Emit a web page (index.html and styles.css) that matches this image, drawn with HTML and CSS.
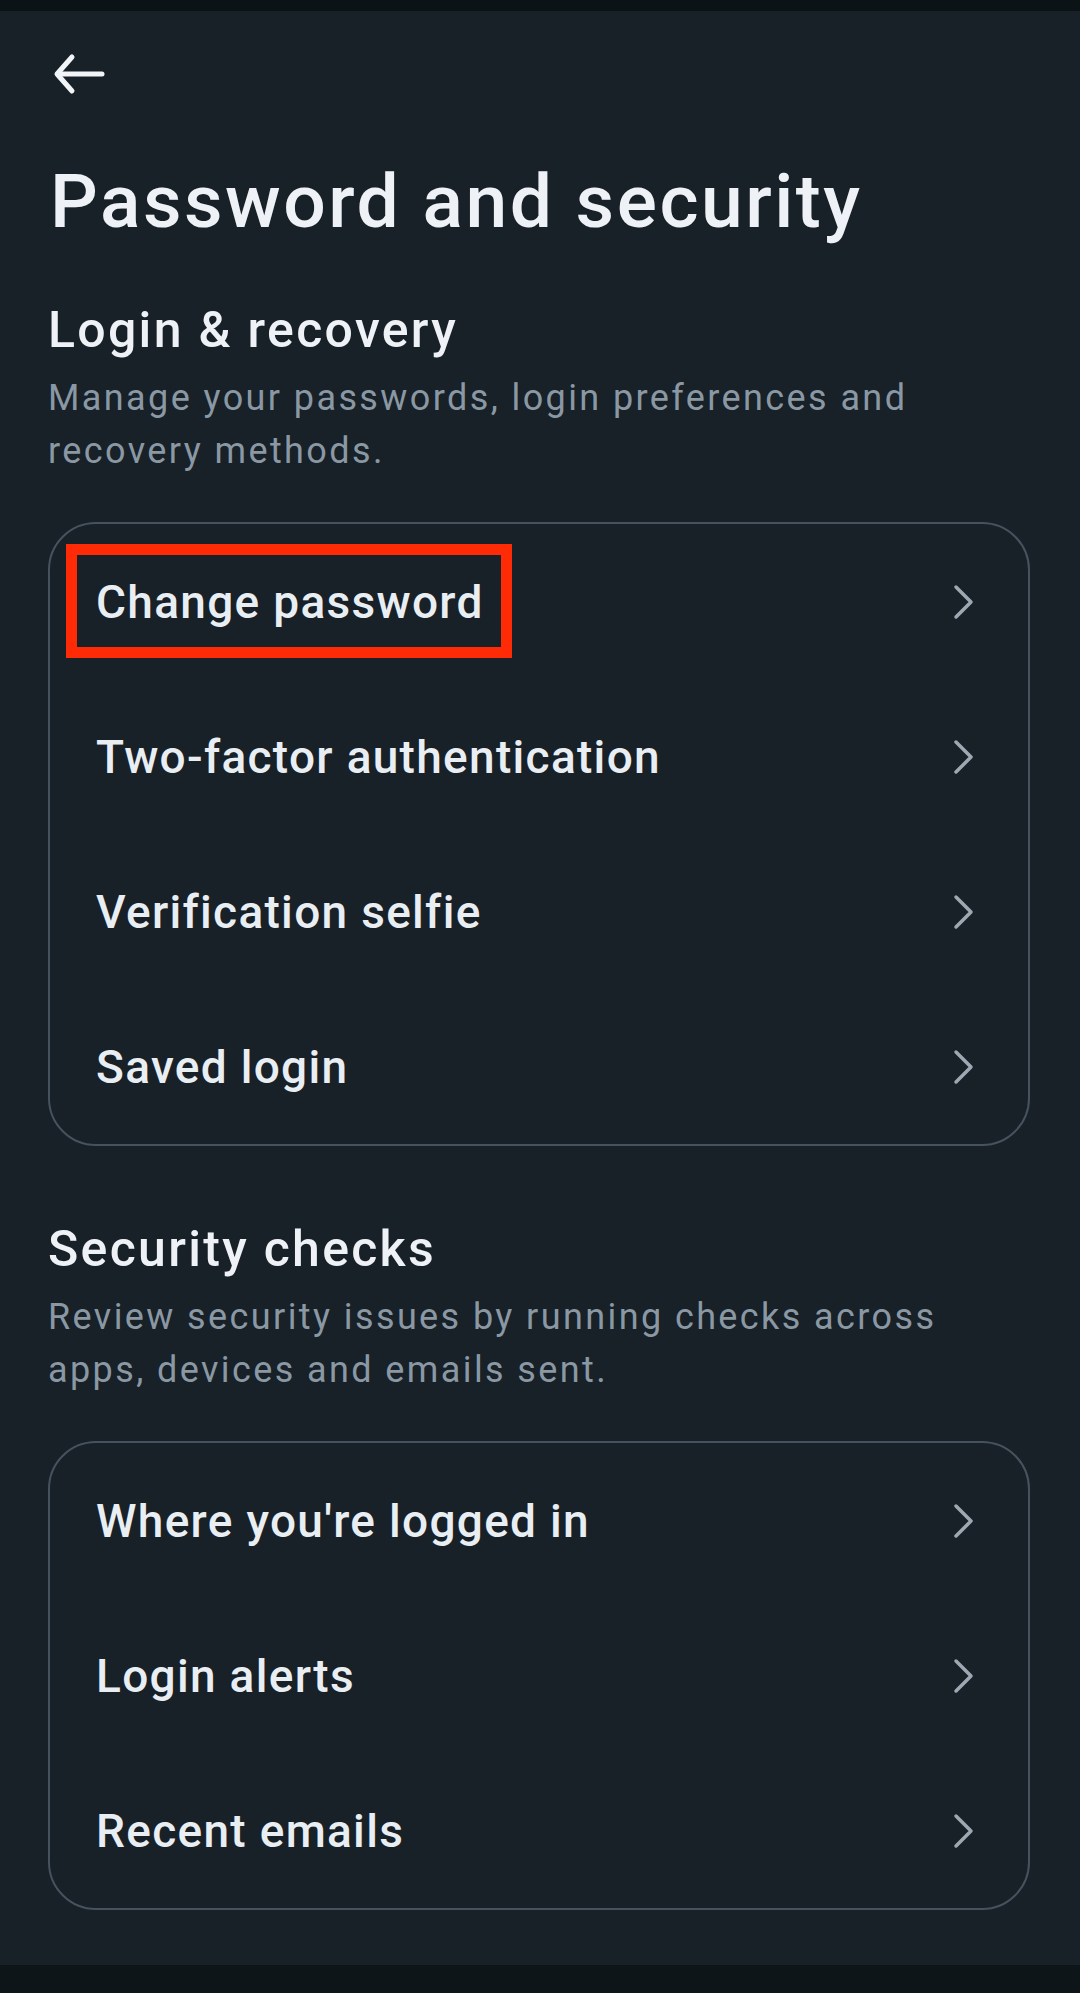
FILE: index.html
```html
<!DOCTYPE html>
<html lang="en">
<head>
<meta charset="utf-8">
<title>Password and security</title>
<link rel="stylesheet" href="styles.css">
</head>
<body>
<div class="screen">
  <div class="statusbar"></div>
  <header class="header">
    <svg class="back" width="56" height="44" viewBox="0 0 56 44" aria-label="Back">
      <path d="M52 22 H8" />
      <path d="M22 5 L7 22 L22 39" />
    </svg>
  </header>
  <main class="main">
    <h1 class="title">Password and security</h1>

    <section class="section">
      <h2 class="section-title">Login &amp; recovery</h2>
      <p class="section-desc">Manage your passwords, login preferences and recovery methods.</p>
      <div class="card">
        <div class="highlight"></div>
        <div class="row"><span class="label">Change password</span><svg class="chev" width="24" height="36" viewBox="0 0 24 36"><path d="M4 3 L19 18 L4 33"/></svg></div>
        <div class="row"><span class="label">Two-factor authentication</span><svg class="chev" width="24" height="36" viewBox="0 0 24 36"><path d="M4 3 L19 18 L4 33"/></svg></div>
        <div class="row"><span class="label">Verification selfie</span><svg class="chev" width="24" height="36" viewBox="0 0 24 36"><path d="M4 3 L19 18 L4 33"/></svg></div>
        <div class="row"><span class="label">Saved login</span><svg class="chev" width="24" height="36" viewBox="0 0 24 36"><path d="M4 3 L19 18 L4 33"/></svg></div>
      </div>
    </section>

    <section class="section section-second">
      <h2 class="section-title">Security checks</h2>
      <p class="section-desc">Review security issues by running checks across apps, devices and emails sent.</p>
      <div class="card">
        <div class="row"><span class="label">Where you're logged in</span><svg class="chev" width="24" height="36" viewBox="0 0 24 36"><path d="M4 3 L19 18 L4 33"/></svg></div>
        <div class="row"><span class="label">Login alerts</span><svg class="chev" width="24" height="36" viewBox="0 0 24 36"><path d="M4 3 L19 18 L4 33"/></svg></div>
        <div class="row"><span class="label">Recent emails</span><svg class="chev" width="24" height="36" viewBox="0 0 24 36"><path d="M4 3 L19 18 L4 33"/></svg></div>
      </div>
    </section>
  </main>
  <div class="navbar"></div>
</div>
</body>
</html>
```
FILE: styles.css
```css
* { box-sizing: border-box; }
html, body {
  margin: 0;
  padding: 0;
  background: #182028;
}
body {
  font-family: Roboto, "Liberation Sans", sans-serif;
  color: #eef2f6;
}
.screen {
  min-height: 100vh;
  display: flex;
  flex-direction: column;
}
.statusbar {
  height: 11px;
  background: #0c1317;
}
.header {
  height: 126px;
  display: flex;
  align-items: center;
  padding-left: 50px;
}
.back {
  display: block;
  fill: none;
  stroke: #f2f5f8;
  stroke-width: 5;
  stroke-linecap: round;
  stroke-linejoin: round;
}
.main {
  flex: 1;
  padding: 0 50px 0 48px;
}
.title {
  margin: 19px 0 0 2px;
  font-size: 75px;
  line-height: 90px;
  font-weight: 500;
  letter-spacing: 2.5px;
  color: #eef2f6;
}
.section {
  margin-top: 54px;
}
.section-second {
  margin-top: 73px;
}
.section-title {
  margin: 0;
  font-size: 50px;
  line-height: 60px;
  font-weight: 500;
  letter-spacing: 2.3px;
  color: #eef2f6;
}
.section-desc {
  margin: 12px 0 0;
  font-size: 36px;
  line-height: 53px;
  font-weight: 400;
  letter-spacing: 2.4px;
  color: #8a98a4;
}
.card {
  position: relative;
  margin-top: 44px;
  border: 2px solid #46525d;
  border-radius: 48px;
}
.row {
  height: 155px;
  display: flex;
  align-items: center;
  justify-content: space-between;
  padding: 0 52px 0 46px;
}
.label {
  font-size: 46px;
  font-weight: 500;
  letter-spacing: 1.3px;
  color: #e9eef3;
}
.chev {
  display: block;
  fill: none;
  stroke: #9ca8b2;
  stroke-width: 3.5;
  stroke-linecap: round;
  stroke-linejoin: round;
}
.highlight {
  position: absolute;
  left: 16px;
  top: 20px;
  width: 446px;
  height: 114px;
  border: 11px solid #ff2a06;
  pointer-events: none;
}
.navbar {
  height: 28px;
  background: #0e1519;
}
```
